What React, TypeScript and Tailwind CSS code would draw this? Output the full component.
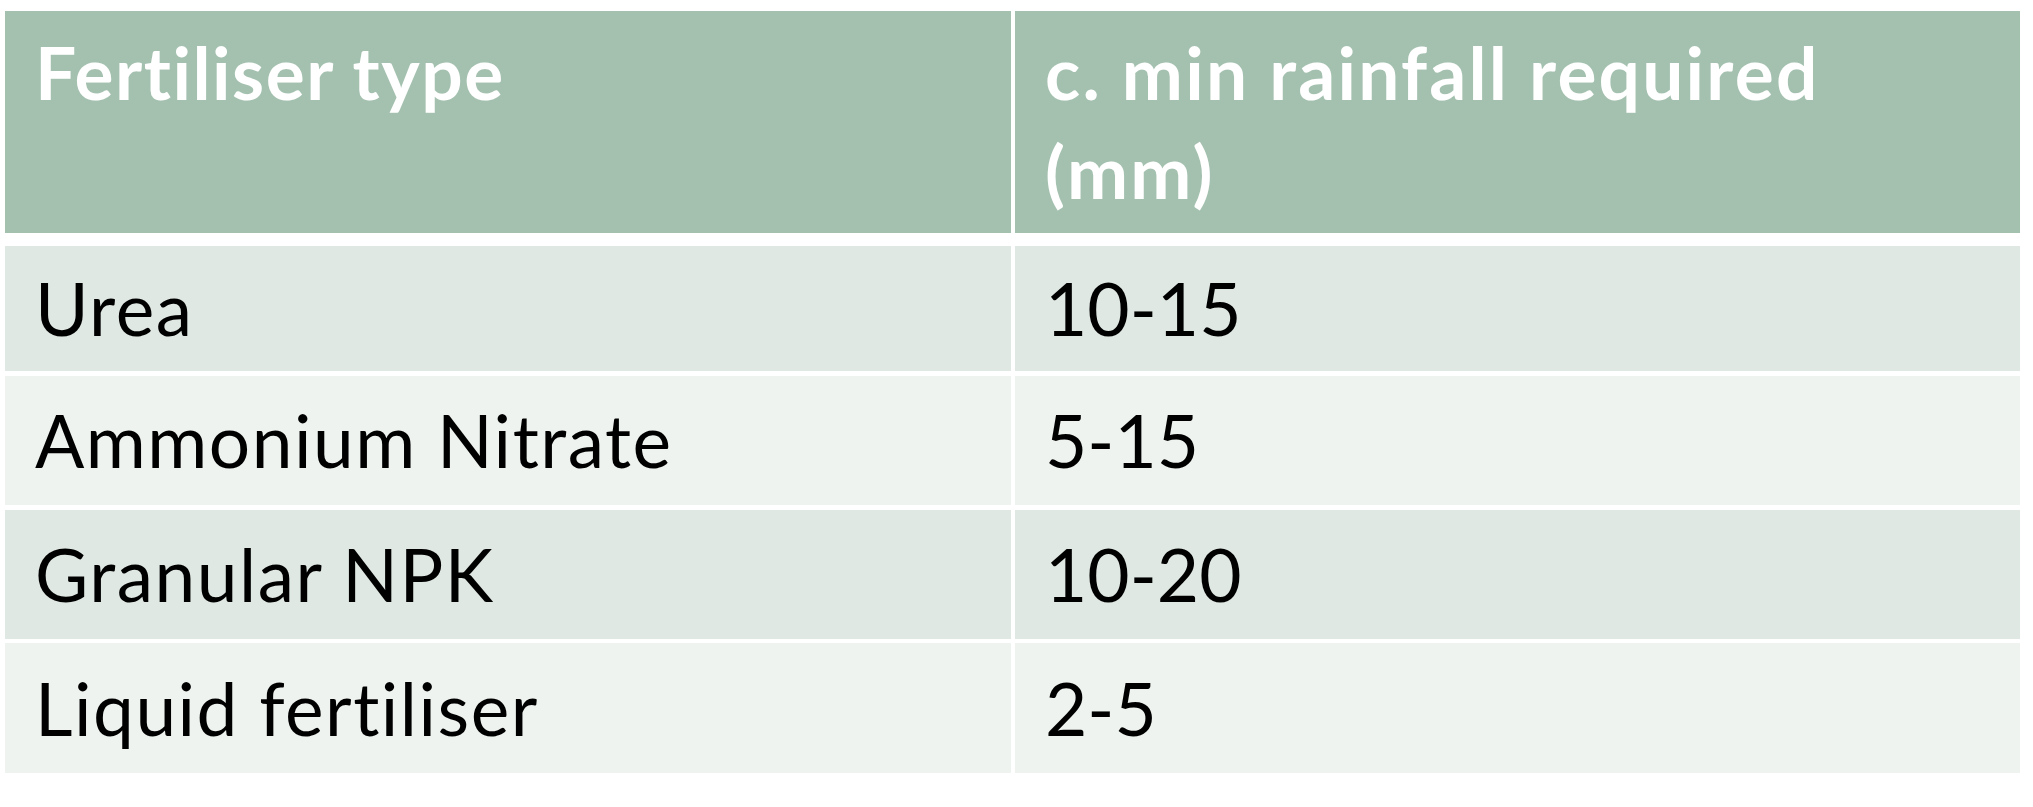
const rows = [
  { name: "Urea", rain: "10-15", bg: "bg-[#dfe8e3]", h: "h-[125px]", mt: "mt-[13px]" },
  { name: "Ammonium Nitrate", rain: "5-15", bg: "bg-[#eef3ef]", h: "h-[129px]", mt: "mt-[5px]" },
  { name: "Granular NPK", rain: "10-20", bg: "bg-[#dfe8e3]", h: "h-[129px]", mt: "mt-[5px]" },
  { name: "Liquid fertiliser", rain: "2-5", bg: "bg-[#eef3ef]", h: "h-[130px]", mt: "mt-[4px]" },
];

export default function App() {
  return (
    <div className="w-full h-[807px] bg-white pt-[11px] pl-[5px] pr-[13px] font-['Lato',sans-serif] [font-variant-ligatures:none]">
      {/* header */}
      <div className="grid grid-cols-[1006px_1005px] gap-x-[4px] h-[222px]">
        <div className="bg-[#a4c1af] pt-[12px] pl-[30px] pr-[60px] text-white font-bold text-[73px] leading-[99px] tracking-[1.5px]">
          Fertiliser type
        </div>
        <div className="bg-[#a4c1af] pt-[12px] pl-[30px] pr-[60px] text-white font-bold text-[73px] leading-[99px] tracking-[2.2px]">
          c. min rainfall required (mm)
        </div>
      </div>

      {/* body rows */}
      {rows.map((r) => (
        <div key={r.name} className={`grid grid-cols-[1006px_1005px] gap-x-[4px] ${r.h} ${r.mt}`}>
          <div className={`${r.bg} flex items-center pl-[30px] text-black text-[73px] leading-none tracking-[1.5px]`}>
            {r.name}
          </div>
          <div className={`${r.bg} flex items-center pl-[30px] text-black text-[73px] leading-none`}>
            {r.rain}
          </div>
        </div>
      ))}
    </div>
  );
}
